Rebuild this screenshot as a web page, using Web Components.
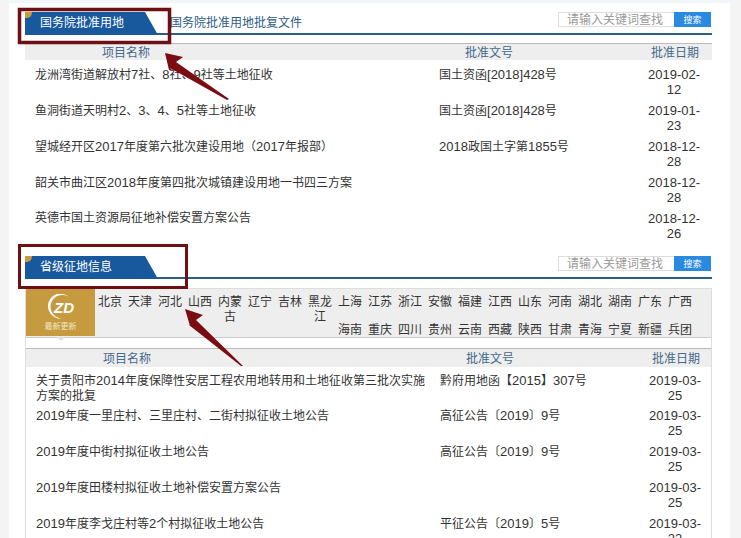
<!DOCTYPE html>
<html lang="zh">
<head>
<meta charset="utf-8">
<title>用地信息</title>
<style>
    html, body { margin: 0; height: 538px; overflow: hidden; background: #f4f4f4; }
    body { font-family: "Liberation Sans", "Noto Sans CJK SC", sans-serif; font-size: 12px; }
</style>
</head>
<body>
<land-page>
    <land-section title="国务院批准用地" link="国务院批准用地批复文件">
        <land-head></land-head>
        <div class="rows" style="padding-top:7px">
            <land-row name="龙洲湾街道解放村7社、8社、9社等土地征收" doc="国土资函[2018]428号" date="2019-02-12"></land-row>
            <land-row name="鱼洞街道天明村2、3、4、5社等土地征收" doc="国土资函[2018]428号" date="2019-01-23"></land-row>
            <land-row name="望城经开区2017年度第六批次建设用地（2017年报部）" doc="2018政国土字第1855号" date="2018-12-28"></land-row>
            <land-row name="韶关市曲江区2018年度第四批次城镇建设用地一书四三方案" doc="" date="2018-12-28"></land-row>
            <land-row name="英德市国土资源局征地补偿安置方案公告" doc="" date="2018-12-26"></land-row>
        </div>
    </land-section>
    <land-section title="省级征地信息" framed style="margin-top:9px">
        <region-bar></region-bar>
        <land-head style="margin-top:10px;height:18px;line-height:20px"></land-head>
        <div class="rows" style="padding-top:6px">
            <land-row style="height:35px" name="关于贵阳市2014年度保障性安居工程农用地转用和土地征收第三批次实施&#10;方案的批复" doc="黔府用地函【2015】307号" date="2019-03-25"></land-row>
            <land-row name="2019年度一里庄村、三里庄村、二街村拟征收土地公告" doc="高征公告〔2019〕9号" date="2019-03-25"></land-row>
            <land-row name="2019年度中街村拟征收土地公告" doc="高征公告〔2019〕9号" date="2019-03-25"></land-row>
            <land-row name="2019年度田楼村拟征收土地补偿安置方案公告" doc="" date="2019-03-25"></land-row>
            <land-row name="2019年度李戈庄村等2个村拟征收土地公告" doc="平征公告〔2019〕5号" date="2019-03-22"></land-row>
        </div>
    </land-section>
    <call-outs></call-outs>
</land-page>

<script>
// latin runs sit a bit larger than the CJK text in the reference
function mixed(text) {
    return text.replace(/[\x21-\x7e]+/g, m => `<span class="lat">${m}</span>`).replace(/\n/g, "<br>")
}

class LandPage extends HTMLElement {
    constructor() {
        super()
        this.attachShadow({mode:"open"}).innerHTML = `
            <style>
            :host {
                display: block;
                position: relative;
                width: 721px;
                height: 538px;
                margin-left: 9px;
                padding: 9px 0 0 16px;
                box-sizing: border-box;
                background: #fff;
                border-top: 3px solid #f1f6fb;
                overflow: hidden;
            }
            </style>
            <slot></slot>
        `
    }
}

class LandSection extends HTMLElement {
    constructor() {
        super()
        this.shadowDOM = this.attachShadow({mode:"open"})
    }

    connectedCallback() {
        this.shadowDOM.innerHTML = `
            <style>
            :host { display: block; width: 687px; }
            .top {
                display: flex;
                align-items: flex-start;
                height: 21px;
                border-bottom: 2px solid #2d5d82;
            }
            .tab {
                position: relative;
                width: 133px;
                height: 23px;
                box-sizing: border-box;
                padding: 4px 0 0 15px;
                line-height: 15px;
                color: #fff;
                background: #18589d;
                clip-path: polygon(0 0, 120px 0, 133px 100%, 0 100%);
                overflow: hidden;
            }
            .tab::before {
                content: "";
                position: absolute;
                left: -4px;
                top: -5px;
                width: 11px;
                height: 11px;
                border-radius: 50%;
                background: #c79c3f;
            }
            .link {
                margin-left: 12px;
                padding-top: 4px;
                line-height: 15px;
                color: #2d5d82;
            }
            .search {
                display: flex;
                margin: 0 1px 0 auto;
                height: 15px;
            }
            .search .kw {
                width: 116px;
                box-sizing: border-box;
                border: 1px solid #ddd;
                border-right: 0;
                padding: 1px 0 0 8px;
                line-height: 13px;
                color: #999;
            }
            .search .go {
                width: 37px;
                text-align: center;
                font-size: 9px;
                line-height: 16px;
                color: #fff;
                background: #2a8ae0;
            }
            .body { margin-top: 8px; }
            :host([framed]) .body {
                margin-top: 9px;
                border: 1px solid #ddd;
                border-bottom: 0;
                border-top: 0;
            }
            </style>
            <div class="top">
                <div class="tab">${this.getAttribute("title")}</div>
                <div class="link">${this.getAttribute("link") || ""}</div>
                <div class="search">
                    <span class="kw">请输入关键词查找</span>
                    <span class="go">搜索</span>
                </div>
            </div>
            <div class="body"><slot></slot></div>
        `
    }
}

class LandHead extends HTMLElement {
    constructor() {
        super()
        this.attachShadow({mode:"open"}).innerHTML = `
            <style>
            :host {
                display: grid;
                grid-template-columns: 414px 206px 60px;
                height: 16px;
                line-height: 18px;
                color: #45698a;
                background: #eee;
                border-top: 1px solid #bbb;
            }
            .name { padding-left: 77px; }
            .doc { padding-left: 26px; }
            .date { text-align: center; }
            </style>
            <div class="name">项目名称</div>
            <div class="doc">批准文号</div>
            <div class="date">批准日期</div>
        `
    }
}

class LandRow extends HTMLElement {
    constructor() {
        super()
        this.shadowDOM = this.attachShadow({mode:"open"})
    }

    connectedCallback() {
        const date = this.getAttribute("date").replace(/-(\d+)$/, "-<wbr>$1")
        this.shadowDOM.innerHTML = `
            <style>
            :host {
                display: grid;
                grid-template-columns: 414px 206px 60px;
                height: 36px;
                line-height: 15px;
                color: #333;
            }
            .name { padding: 0 10px; }
            .lat { font-size: 13px; }
            .date { font-size: 13px; text-align: center; padding: 0 3px 0 1px; }
            </style>
            <div class="name">${mixed(this.getAttribute("name"))}</div>
            <div class="doc">${mixed(this.getAttribute("doc"))}</div>
            <div class="date">${date}</div>
        `
    }
}

class RegionBar extends HTMLElement {
    constructor() {
        super()
        const first = "北京 天津 河北 山西 内蒙古 辽宁 吉林 黑龙江 上海 江苏 浙江 安徽 福建 江西 山东 河南 湖北 湖南 广东 广西".split(" ")
        const second = "海南 重庆 四川 贵州 云南 西藏 陕西 甘肃 青海 宁夏 新疆 兵团".split(" ")
        const cell = n => `<a>${n}</a>`
        this.attachShadow({mode:"open"}).innerHTML = `
            <style>
            :host {
                display: flex;
                height: 48px;
                background: #eee;
                border-top: 1px solid #ddd;
                border-bottom: 1px solid #ccc;
            }
            .logo {
                position: relative;
                flex: none;
                width: 69px;
                height: 47px;
                background: #c69a3f;
                color: #fff;
            }
            .logo svg { position: absolute; left: 22px; top: 5px; }
            .logo b {
                position: absolute;
                left: 28px;
                top: 11px;
                font: italic bold 15px/16px "Liberation Sans", sans-serif;
            }
            .logo small {
                position: absolute;
                left: 0;
                right: 0;
                top: 32px;
                text-align: center;
                font-size: 8px;
                line-height: 11px;
                color: #f3e6c8;
            }
            .logo::after {
                content: "";
                position: absolute;
                left: 31px;
                bottom: -5px;
                border: 4px solid transparent;
                border-bottom: 0;
                border-top-color: #ddd;
            }
            .names {
                display: grid;
                grid-template-columns: repeat(20, 30px);
                grid-auto-rows: 28px;
                padding-top: 6px;
            }
            a {
                padding: 0 3px;
                line-height: 15px;
                color: #333;
                text-align: center;
            }
            .names a.wrap { grid-column-start: 9; }
            </style>
            <div class="logo">
                <svg width="26" height="26" viewBox="0 0 26 26">
                    <path d="M21 3A12.5 12.5 0 1 0 14 24.5A11.8 11.8 0 1 1 21 3Z" fill="#fff"/>
                </svg>
                <b>ZD</b>
                <small>最新更新</small>
            </div>
            <div class="names">
                ${first.map(cell).join("")}
                ${second.map((n, i) => `<a class="${i ? "" : "wrap"}">${n}</a>`).join("")}
            </div>
        `
    }
}

// the red marks laid over the screenshot
class CallOuts extends HTMLElement {
    constructor() {
        super()
        this.attachShadow({mode:"open"}).innerHTML = `
            <style>
            :host { position: absolute; left: -9px; top: -3px; width: 741px; height: 538px; pointer-events: none; }
            svg { display: block; }
            </style>
            <svg width="741" height="538" viewBox="0 0 741 538">
                <rect x="19.5" y="9.5" width="150" height="33" fill="none" stroke="#6e0f14" stroke-width="3.5"/>
                <rect x="19.5" y="245.5" width="167" height="42" fill="none" stroke="#6e0f14" stroke-width="3"/>
                <polygon fill="#7a0d12" points="165,53 183,57 176,62 229,99 227,100 170,68 172,70 169,70"/>
                <polygon fill="#7a0d12" points="185,309 203,315 196,320 243,366 241,366 189,325 191,325 190,326"/>
            </svg>
        `
    }
}

customElements.define("land-page", LandPage)
customElements.define("land-section", LandSection)
customElements.define("land-head", LandHead)
customElements.define("land-row", LandRow)
customElements.define("region-bar", RegionBar)
customElements.define("call-outs", CallOuts)
</script>
</body>
</html>
